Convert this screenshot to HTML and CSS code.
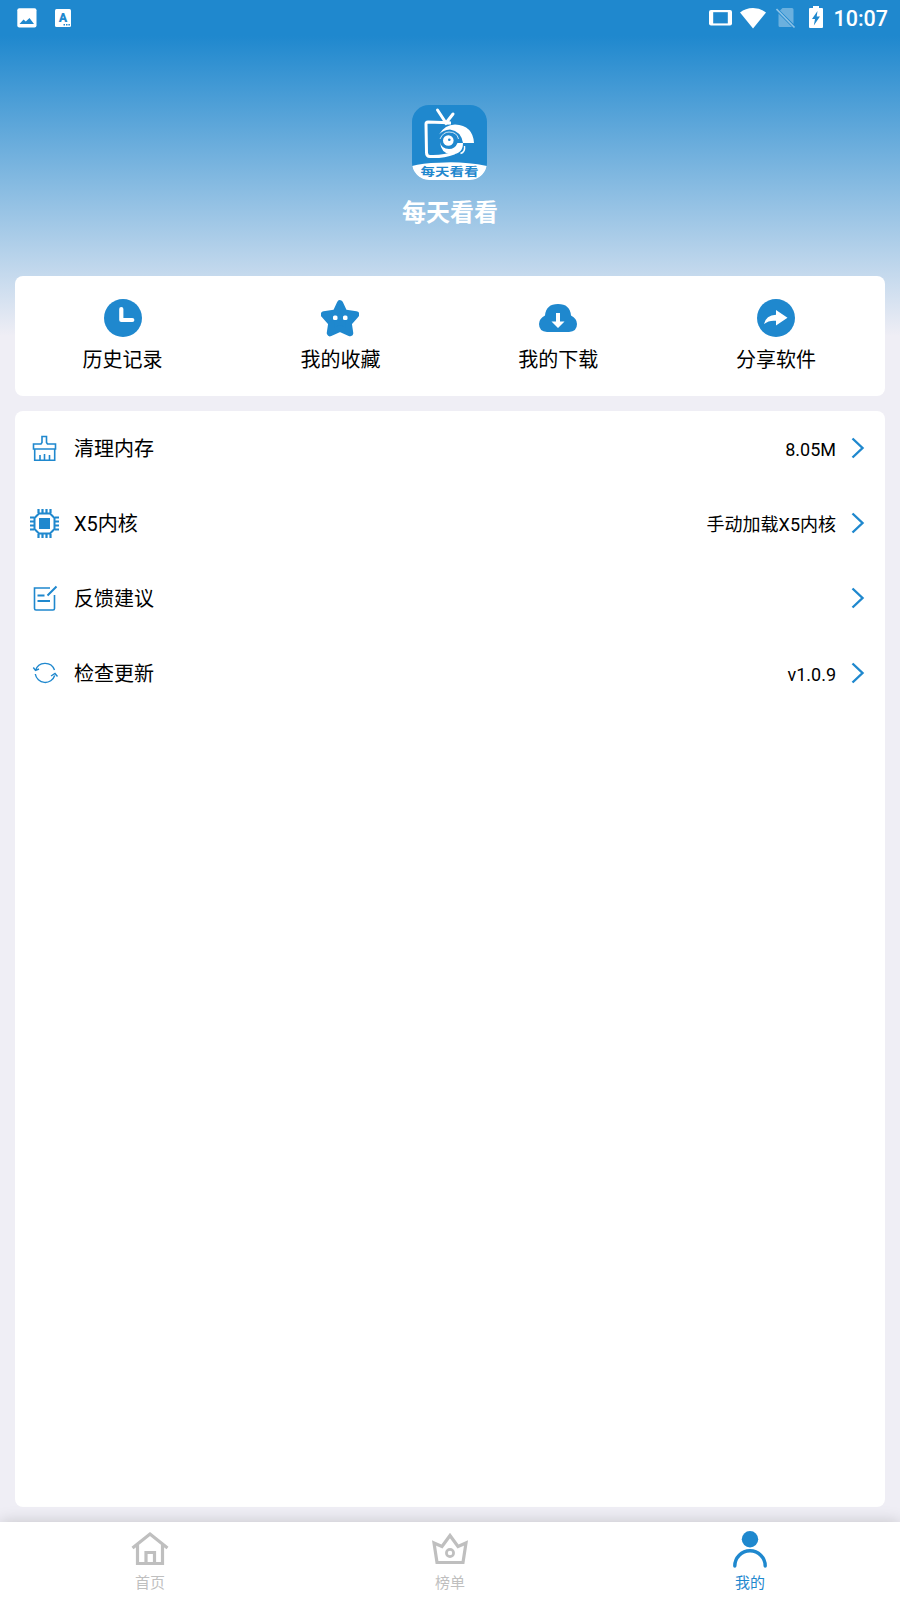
FILE: index.html
```html
<!DOCTYPE html>
<html lang="zh-CN">
<head>
    <meta charset="UTF-8">
    <meta name="viewport" content="width=device-width, initial-scale=1.0">
    <title>每天看看</title>
    <link rel="stylesheet" href="styles.css">
</head>
<body>
    <div class="page">
        <div class="status-bar">
            <div class="status-left">
                <svg width="20" height="20" viewBox="0 0 20 20">
                    <rect x="0.3" y="0.3" width="19.2" height="19.2" rx="2" fill="#fff"/>
                    <path d="M2.5 16l4-4.500 2.300 2L12.500 10l4.500 6z" fill="#1f88ce"/>
                </svg>
                <svg width="16" height="18" viewBox="0 0 16 18">
                    <rect width="16" height="18" rx="1.5" fill="#fff"/>
                    <text class="lang-letter" x="8" y="13" text-anchor="middle">A</text>
                    <path d="M8.500 15.700h1.500M11 15.700h1.500M13.400 15.700h1.500" stroke="#1f88ce" stroke-width="1.600"/>
                </svg>
            </div>
            <div class="status-right">
                <svg class="cast" width="23" height="16" viewBox="0 0 23 16">
                    <rect width="23" height="15.5" rx="2" fill="#fff"/>
                    <rect x="4.2" y="2.2" width="14.6" height="11.2" fill="#1f88ce"/>
                </svg>
                <svg class="wifi" width="26" height="21" viewBox="0 0 26 21">
                    <path d="M13 20.5L0 4.5Q5.500 0 13 0t13 4.500z" fill="#fff"/>
                </svg>
                <svg class="sim" width="20" height="22" viewBox="0 0 20 22">
                    <path d="M6.500 1H16q1.500 0 1.500 1.500V17L4 3.500zM2.500 6.500L16 20H4q-1.500 0-1.500-1.500z" fill="#fff" opacity=".34"/>
                    <path d="M.5 2l18 18.500" stroke="#fff" stroke-width="1.600" opacity=".5"/>
                </svg>
                <svg class="battery" width="14" height="22" viewBox="0 0 14 22">
                    <path d="M4 0h6v2h3q1 0 1 1v18q0 1-1 1H1q-1 0-1-1V3q0-1 1-1h3z" fill="#fff"/>
                    <path d="M8.500 5L3 13h3l-1.200 6.500L11 10.500H7.700z" fill="#1f88ce"/>
                </svg>
                <span class="clock">10:07</span>
            </div>
        </div>

        <div class="header">
            <svg class="logo" width="75" height="75" viewBox="0 0 75 75">
                <defs>
                    <clipPath id="logoClip"><rect width="75" height="75" rx="17"/></clipPath>
                </defs>
                <g clip-path="url(#logoClip)">
                    <rect width="75" height="75" fill="#1f88ce"/>
                    <path d="M25.500 5L34 18l7-9" fill="none" stroke="#fff" stroke-width="3" stroke-linecap="round"/>
                    <path d="M29 16.500h10v3h-6z" fill="#fff"/>
                    <path d="M37 17.800L16 17q-2 0-2 2l.5 28.500q0 4 3.500 4 14 .5 24-3.500" fill="none" stroke="#fff" stroke-width="3" stroke-linecap="round"/>
                    <path d="M27 29.500Q33 19.500 43 19.500q18 1 19 18.500H51Q49 26 38 24.500 31 25 27 29.500z" fill="#fff"/>
                    <path d="M28 34q3-7 9-7 8 0 9.500 7" fill="none" stroke="#fff" stroke-width=".8"/>
                    <path d="M28 37q1.500 7 9 7 6 0 8.500-6H51q0 12-13 11-9-1-10-12z" fill="#fff"/>
                    <path d="M52.500 41q1 6-4 7.500" fill="none" stroke="#fff" stroke-width="1.400"/>
                    <circle cx="36.300" cy="35.500" r="5.300" fill="#fff"/>
                    <circle cx="37.300" cy="34.700" r="1.300" fill="#1f88ce"/>
                    <path d="M0 61q10-3 27-3.300Q50 56 75 61v14H0z" fill="#fff"/>
                </g>
                <text class="logo-text" x="37.500" y="89" text-anchor="middle" textLength="58" lengthAdjust="spacingAndGlyphs" transform="scale(1 .8)">每天看看</text>
            </svg>
            <h1>每天看看</h1>
        </div>

        <div class="shortcuts">
            <div class="shortcut">
                <svg width="38" height="38" viewBox="0 0 38 38">
                    <circle cx="19" cy="19" r="19" fill="#1f88ce"/>
                    <path d="M17.3 10v11h11" fill="none" stroke="#fff" stroke-width="4.2" stroke-linecap="round" stroke-linejoin="round"/>
                </svg>
                <span>历史记录</span>
            </div>
            <div class="shortcut">
                <svg width="38" height="38" viewBox="0 0 38 38">
                    <path d="M19 4.500l4.300 9.300 11.700 1.700-7.500 8.500 1.500 10L19 29.500 9 34l1.500-10L3 15.500l11.700-1.700z" fill="#1f88ce" stroke="#1f88ce" stroke-width="6.500" stroke-linejoin="round"/>
                    <rect x="12" y="16.500" width="4.500" height="4.500" rx="1.500" fill="#fff"/>
                    <rect x="22" y="16.500" width="4.500" height="4.500" rx="1.500" fill="#fff"/>
                </svg>
                <span>我的收藏</span>
            </div>
            <div class="shortcut">
                <svg width="38" height="38" viewBox="0 0 38 38">
                    <path d="M8 33q-8-.5-8-8 0-5.500 6-8.500Q7 5 19 5t13 11.500q6 3 6 8.500 0 7.500-8 8z" fill="#1f88ce"/>
                    <path d="M17 14h4v8.500h4.500L19 29l-6.500-6.500H17z" fill="#fff"/>
                </svg>
                <span>我的下载</span>
            </div>
            <div class="shortcut">
                <svg width="38" height="38" viewBox="0 0 38 38">
                    <circle cx="19" cy="19" r="19" fill="#1f88ce"/>
                    <path d="M19 11l11.500 7.700L19 26.500v-4.700Q12 21 7 25q2-9 12-9.300z" fill="#fff"/>
                </svg>
                <span>分享软件</span>
            </div>
        </div>

        <div class="menu">
            <div class="menu-row">
                <svg class="menu-icon" width="30" height="30" viewBox="0 0 30 30">
                    <path d="M12 9.500V3.500h4.500v6l1 1.500h8v5h-22v-5H11zM4.700 16v11.300h20V16M10 27v-5M14.500 27v-6M19.500 27v-5" fill="none" stroke="#1f88ce" stroke-width="1.600"/>
                </svg>
                <span class="menu-label">清理内存</span>
                <span class="menu-value">8.05M</span>
                <svg class="arrow" width="14" height="22" viewBox="0 0 14 22"><path d="M1.500 1.500L11.500 11l-10 9.500"/></svg>
            </div>
            <div class="menu-row">
                <svg class="menu-icon" width="30" height="30" viewBox="0.5 -0.5 30 30">
                    <path d="M9 .5v4M13 .5v4M17 .5v4M21 .5v4M9 25.500v4M13 25.500v4M17 25.500v4M21 25.500v4M.5 9h4M.5 13h4M.5 17h4M.5 21h4M25.500 9h4M25.500 13h4M25.500 17h4M25.500 21h4" stroke="#1f88ce" stroke-width="2.200"/>
                    <path d="M9.500 5h11L25 9.500v11L20.500 25h-11L5 20.500v-11z" fill="none" stroke="#1f88ce" stroke-width="2"/>
                    <rect x="9.500" y="9.500" width="11" height="11" fill="#1f88ce"/>
                </svg>
                <span class="menu-label">X5内核</span>
                <span class="menu-value">手动加载X5内核</span>
                <svg class="arrow" width="14" height="22" viewBox="0 0 14 22"><path d="M1.500 1.500L11.500 11l-10 9.500"/></svg>
            </div>
            <div class="menu-row">
                <svg class="menu-icon" width="30" height="30" viewBox="0 0 30 30">
                    <path d="M20 5H4.500v20.500q0 1.500 1.500 1.500h17q1.500 0 1.500-1.500V12" fill="none" stroke="#1f88ce" stroke-width="1.600"/>
                    <path d="M7.500 12.500h7M7.500 18h12.500M17.500 12.500l9-9" fill="none" stroke="#1f88ce" stroke-width="2"/>
                </svg>
                <span class="menu-label">反馈建议</span>
                <span class="menu-value"></span>
                <svg class="arrow" width="14" height="22" viewBox="0 0 14 22"><path d="M1.500 1.500L11.500 11l-10 9.500"/></svg>
            </div>
            <div class="menu-row">
                <svg class="menu-icon" width="30" height="30" viewBox="0 0 30 30">
                    <path d="M5.500 12.500a10 10 0 0 1 19-.5M24.700 17.500A10 10 0 0 1 5.300 16M3.300 9.500l2.200 3 3.500-1.500M21 18l4-2.500 2.500 3" fill="none" stroke="#1f88ce" stroke-width="1.400"/>
                </svg>
                <span class="menu-label">检查更新</span>
                <span class="menu-value">v1.0.9</span>
                <svg class="arrow" width="14" height="22" viewBox="0 0 14 22"><path d="M1.500 1.500L11.500 11l-10 9.500"/></svg>
            </div>
        </div>

        <div class="tab-bar">
            <div class="tab">
                <svg width="38" height="38" viewBox="0 0 38 38">
                    <path d="M1.500 17L19 3l17.500 14M6.500 14v18.500h25V14M15 32.500V21.500h8.500v11" fill="none" stroke="#bfbfbf" stroke-width="3.200"/>
                </svg>
                <span>首页</span>
            </div>
            <div class="tab">
                <svg width="38" height="38" viewBox="0 0 38 38">
                    <path d="M3 12l8 3.500 8-11 8 11 8-3.500-3 19.500H6z" fill="none" stroke="#bfbfbf" stroke-width="3.200"/>
                    <circle cx="19" cy="22" r="3.600" fill="none" stroke="#bfbfbf" stroke-width="2.700"/>
                </svg>
                <span>榜单</span>
            </div>
            <div class="tab active">
                <svg width="38" height="38" viewBox="0 0 38 38">
                    <circle cx="19" cy="8.200" r="8.200" fill="#1f88ce"/>
                    <path d="M3.800 35a15.200 15.200 0 0 1 30.400 0" fill="none" stroke="#1f88ce" stroke-width="3.400" stroke-linecap="round"/>
                </svg>
                <span>我的</span>
            </div>
        </div>
    </div>
</body>
</html>
```
FILE: styles.css
```css
* {
    box-sizing: border-box;
}

body {
    margin: 0;
    font-family: Roboto, "Noto Sans CJK SC", sans-serif;
    color: #000;
    background-color: #efeef5;
}

svg {
    display: block;
    flex-shrink: 0;
}

.page {
    display: flex;
    flex-direction: column;
    height: 1600px;
    background: linear-gradient(#1f88ce 36px, #efeef5 336px);
}

.status-bar {
    display: flex;
    justify-content: space-between;
    height: 36px;
    padding: 0 12px 0 17px;
}

.status-left {
    display: flex;
    align-items: center;
    gap: 18px;
}

.lang-letter {
    font-size: 12.5px;
    font-weight: 900;
    fill: #1f88ce;
}

.status-right {
    display: flex;
    align-items: center;
}

.wifi {
    margin-left: 8px;
}

.sim {
    margin-left: 10px;
}

.battery {
    margin-left: 13px;
    margin-bottom: 2px;
}

.clock {
    margin-left: 10px;
    font-size: 21.5px;
    line-height: 36px;
    font-weight: 500;
    padding-top: 1px;
    color: #fff;
}

.header {
    display: flex;
    flex-direction: column;
    align-items: center;
    height: 240px;
    padding-top: 69px;
}

.logo {
    margin-right: 1px;
}

.logo-text {
    font-size: 14px;
    font-weight: 700;
    fill: #1f88ce;
}

h1 {
    margin: 15px 0 0;
    font-size: 24px;
    line-height: 36px;
    font-weight: 700;
    color: #fff;
}

.shortcuts {
    display: flex;
    height: 120px;
    margin: 0 15px;
    padding: 23px 0 0;
    background-color: #fff;
    border-radius: 8px;
}

.shortcut {
    flex: 1;
    display: flex;
    flex-direction: column;
    align-items: center;
    font-size: 20px;
    line-height: 30px;
}

.shortcut:first-child {
    margin-left: -1.3px;
}

.shortcut span {
    margin-top: 8px;
}

.menu {
    flex: 1;
    margin: 15px;
    background-color: #fff;
    border-radius: 8px;
}

.menu-row {
    display: flex;
    align-items: center;
    height: 75px;
    padding: 0 20px 0 15px;
}

.menu-icon,
.arrow {
    margin-bottom: 1px;
}

.menu-label {
    margin-left: 14px;
    font-size: 20px;
    line-height: 30px;
}

.menu-value {
    margin-left: auto;
    margin-right: 15px;
    padding-top: 2px;
    font-size: 18px;
    line-height: 28px;
}

.arrow path {
    fill: none;
    stroke: #1f88ce;
    stroke-width: 2.4;
}

.tab-bar {
    display: flex;
    height: 78px;
    background-color: #fff;
    box-shadow: 0 0 15px rgba(0, 0, 0, 0.18);
}

.tab {
    flex: 1;
    display: flex;
    flex-direction: column;
    align-items: center;
    padding-top: 9px;
    font-size: 15px;
    line-height: 22px;
    color: #bfbfbf;
}

.tab span {
    margin-top: 3px;
}

.tab.active {
    color: #1f88ce;
}
```
